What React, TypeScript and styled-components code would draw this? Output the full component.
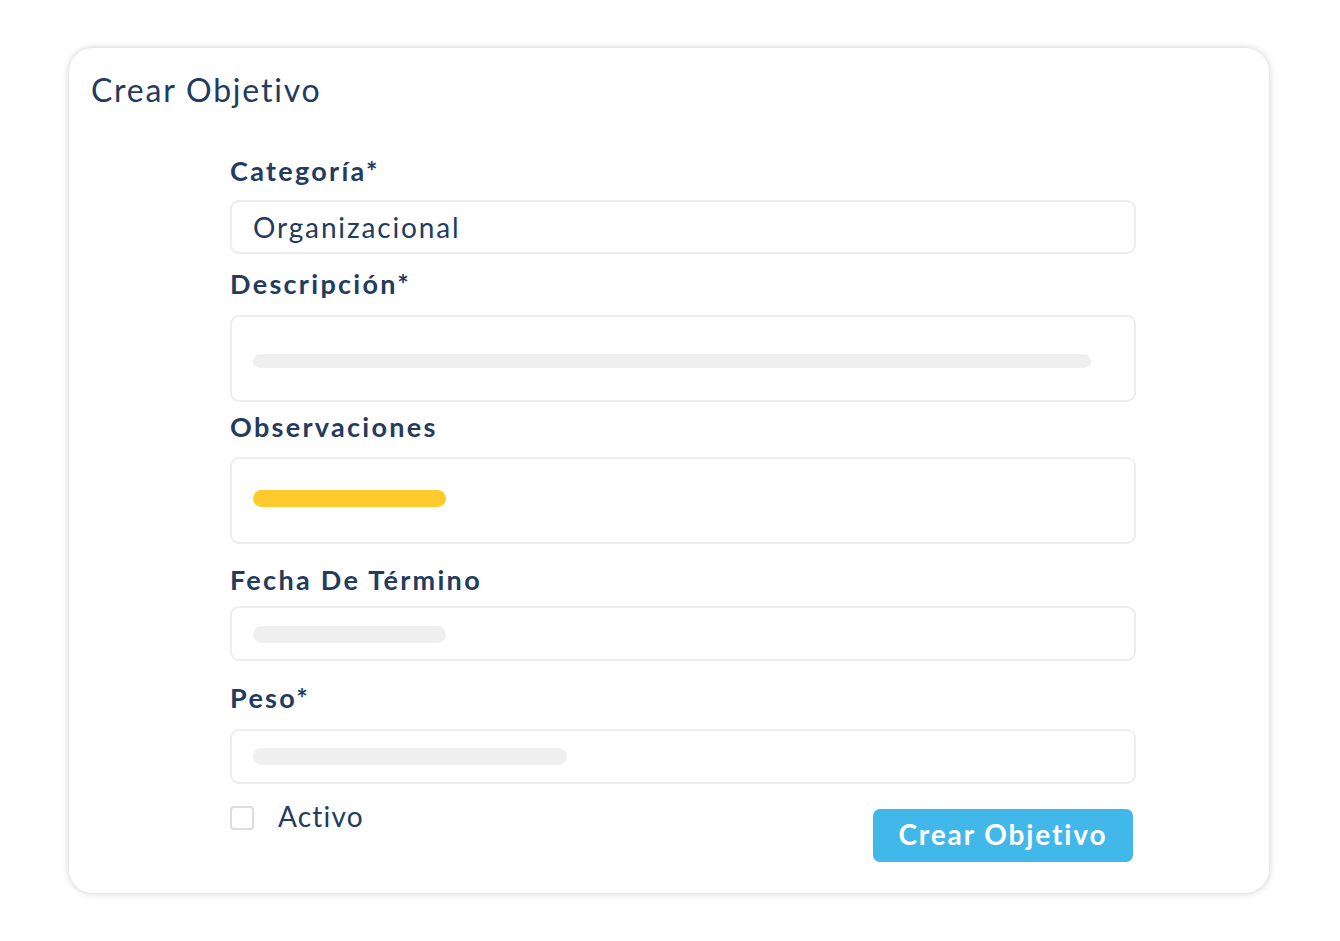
import styled, { createGlobalStyle } from 'styled-components';

const GlobalStyle = createGlobalStyle`
  * {
    box-sizing: border-box;
  }

  body {
    margin: 0;
    background: #ffffff;
    font-family: Lato, 'Noto Sans', sans-serif;
    color: #223b5e;
  }
`;

type Field = {
  label: string;
  top: number;
  labelGap: number;
  height: number;
  value?: string;
  bar?: { width: number; height: number; color: string; offset: number };
};

const fields: Field[] = [
  { label: 'Categoría*', top: 0, labelGap: 13, height: 54, value: 'Organizacional' },
  {
    label: 'Descripción*',
    top: 14,
    labelGap: 15,
    height: 87,
    bar: { width: 838, height: 14, color: '#efefef', offset: 37 },
  },
  {
    label: 'Observaciones',
    top: 9,
    labelGap: 14,
    height: 87,
    bar: { width: 193, height: 17, color: '#ffca2c', offset: 31 },
  },
  {
    label: 'Fecha De Término',
    top: 20,
    labelGap: 10,
    height: 55,
    bar: { width: 193, height: 17, color: '#efefef', offset: 18 },
  },
  {
    label: 'Peso*',
    top: 21,
    labelGap: 15,
    height: 55,
    bar: { width: 314, height: 17, color: '#efefef', offset: 17 },
  },
];

function App() {
  return (
    <>
      <GlobalStyle />
      <Page>
        <Card>
          <Title>Crear Objetivo</Title>
          <Form>
            {fields.map((field) => (
              <FieldBlock key={field.label} $top={field.top}>
                <Label $gap={field.labelGap}>{field.label}</Label>
                <InputBox $height={field.height} $center={!field.bar}>
                  {field.value && <Value>{field.value}</Value>}
                  {field.bar && (
                    <Bar
                      $offset={field.bar.offset}
                      $height={field.bar.height}
                      $color={field.bar.color}
                      style={{ width: field.bar.width }}
                    />
                  )}
                </InputBox>
              </FieldBlock>
            ))}
            <Footer>
              <CheckLabel>
                <Checkbox type="checkbox" />
                <CheckText>Activo</CheckText>
              </CheckLabel>
              <SubmitButton type="button">Crear Objetivo</SubmitButton>
            </Footer>
          </Form>
        </Card>
      </Page>
    </>
  );
}

export default App;

const Page = styled.div`
  width: 1340px;
  height: 941px;
  padding: 48px 0 0 69px;
`;

const Card = styled.div`
  width: 1200px;
  height: 845px;
  background: #ffffff;
  border-radius: 24px;
  box-shadow: 0 0 6px 1px rgba(0, 0, 0, 0.16);
  padding: 20px 0 0 22px;
`;

const Title = styled.h1`
  margin: 0;
  font-size: 32px;
  font-weight: 400;
  line-height: 44px;
  letter-spacing: 1.8px;
  color: #223b5e;
`;

const Form = styled.div`
  width: 906px;
  margin: 43px 0 0 139px;
  display: flex;
  flex-direction: column;
`;

const FieldBlock = styled.div<{ $top: number }>`
  margin-top: ${(p) => p.$top}px;
  display: flex;
  flex-direction: column;
`;

const Label = styled.label<{ $gap: number }>`
  font-size: 27px;
  font-weight: 700;
  line-height: 32px;
  letter-spacing: 2.3px;
  color: #223b5e;
  margin-bottom: ${(p) => p.$gap}px;
`;

const InputBox = styled.div<{ $height: number; $center: boolean }>`
  height: ${(p) => p.$height}px;
  border: 2px solid #ededed;
  border-radius: 9px;
  padding: 0 21px;
  display: flex;
  align-items: ${(p) => (p.$center ? 'center' : 'flex-start')};
`;

const Value = styled.span`
  font-size: 28px;
  font-weight: 400;
  letter-spacing: 1.85px;
  color: #223b5e;
`;

const Bar = styled.div<{ $offset: number; $height: number; $color: string }>`
  margin-top: ${(p) => p.$offset}px;
  height: ${(p) => p.$height}px;
  border-radius: ${(p) => p.$height / 2}px;
  background: ${(p) => p.$color};
`;

const Footer = styled.div`
  margin-top: 22px;
  padding-right: 3px;
  display: flex;
  justify-content: space-between;
  align-items: flex-start;
`;

const CheckLabel = styled.label`
  display: flex;
  align-items: center;
  gap: 24px;
  font-size: 28px;
  line-height: 22px;
  letter-spacing: 1.2px;
  color: #223b5e;
`;

const CheckText = styled.span`
  margin-top: -5px;
`;

const Checkbox = styled.input`
  appearance: none;
  margin: 0;
  width: 24px;
  height: 24px;
  border: 2px solid #dcdcdc;
  border-radius: 4px;
  background: #ffffff;
`;

const SubmitButton = styled.button`
  margin-top: 3px;
  width: 260px;
  height: 53px;
  padding: 0 0 3px;
  border: none;
  border-radius: 7px;
  background: #42b8ea;
  color: #ffffff;
  font-family: Lato, 'Noto Sans', sans-serif;
  font-size: 28px;
  font-weight: 700;
  letter-spacing: 1.9px;
  cursor: pointer;
`;
